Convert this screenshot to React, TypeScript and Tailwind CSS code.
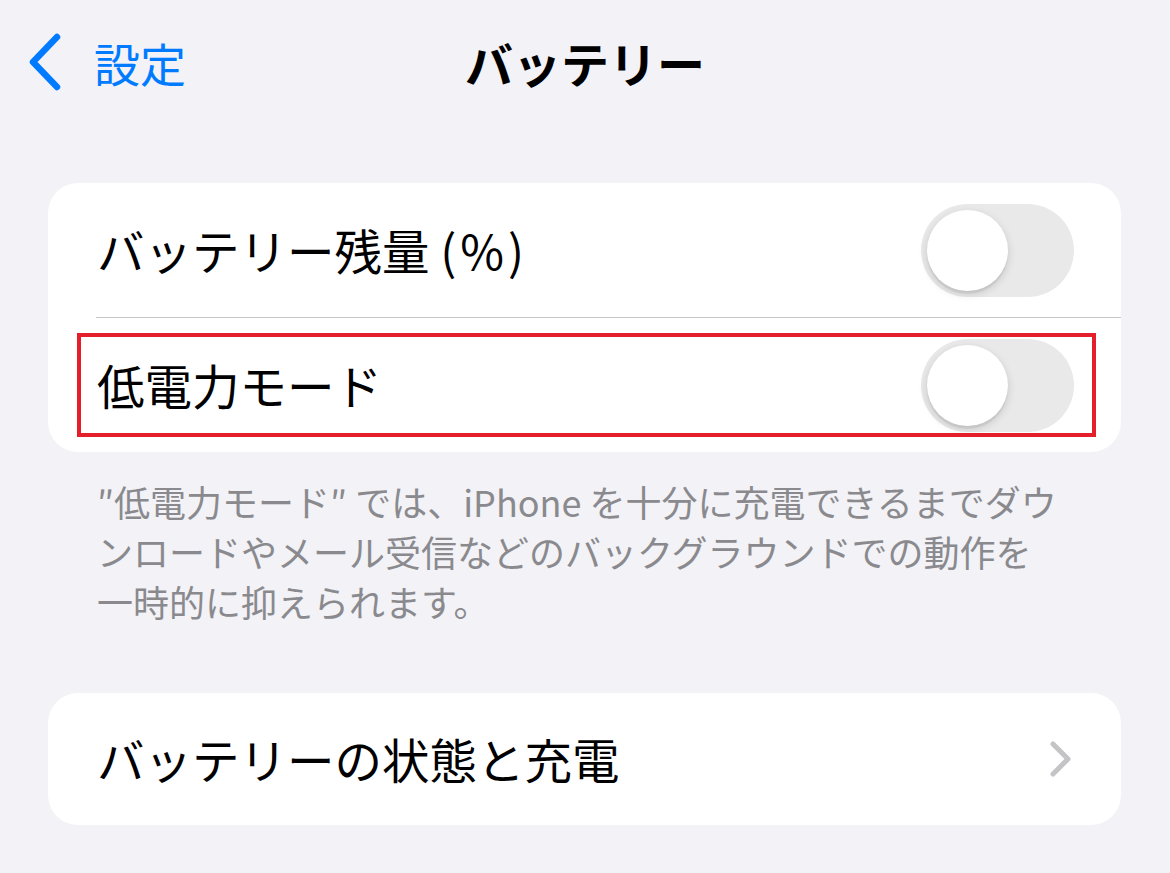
import React from "react";

const font = { fontFamily: '"Noto Sans CJK JP", "Noto Sans", sans-serif' };

const Toggle = () => (
  <div className="relative h-[93px] w-[153px] shrink-0 rounded-full bg-[#e9e9ea]">
    <div className="absolute left-[6px] top-[6px] h-[81px] w-[81px] rounded-full bg-white shadow-[0_3px_8px_rgba(0,0,0,0.15),0_3px_1px_rgba(0,0,0,0.06)]" />
  </div>
);

export default function App() {
  return (
    <div
      className="h-[873px] w-[1170px] overflow-hidden bg-[#f2f2f7] text-black"
      style={font}
    >
      {/* Nav bar */}
      <div className="relative flex h-[124px] items-center">
        <div className="flex items-center pl-[28px]">
          <svg width="34" height="58" viewBox="0 0 34 58" fill="none">
            <path
              d="M29 4 L5 29 L29 54"
              stroke="#007aff"
              strokeWidth="6.5"
              strokeLinecap="round"
              strokeLinejoin="round"
            />
          </svg>
          <span className="ml-[32px] text-[46px] leading-none text-[#007aff]">設定</span>
        </div>
        <div className="absolute inset-x-0 top-0 flex h-[124px] items-center justify-center">
          <span className="text-[48px] font-bold leading-none">バッテリー</span>
        </div>
      </div>

      <div className="px-[48px] pt-[59px]">
        {/* Card 1 */}
        <div className="w-[1073px] overflow-hidden rounded-[30px] bg-white">
          <div className="flex h-[134px] items-center justify-between pl-[49px] pr-[47px]">
            <span className="text-[47.5px] leading-none">
              バッテリー残量 <span className="tracking-[4px]">(%)</span>
            </span>
            <Toggle />
          </div>
          <div className="ml-[48px] h-px bg-[#c6c6c8]" />
          <div className="relative flex h-[134px] items-center justify-between pl-[49px] pr-[47px]">
            <span className="text-[47.5px] leading-none">低電力モード</span>
            <Toggle />
            <div className="pointer-events-none absolute left-[29px] top-[15px] h-[104px] w-[1019px] border-4 border-[#e41e2b]" />
          </div>
        </div>

        {/* Footer */}
        <p className="mt-[24px] pl-[49px] text-[36px] leading-[50px] text-[#8a8a8e]">
          ″低電力モード″ では、iPhone を十分に充電できるまでダウ
          <br />
          ンロードやメール受信などのバックグラウンドでの動作を
          <br />
          一時的に抑えられます。
        </p>

        {/* Card 2 */}
        <div className="mt-[67px] flex h-[132px] w-[1073px] items-center justify-between rounded-[30px] bg-white pl-[49px] pr-[48px]">
          <span className="text-[47.5px] leading-none">バッテリーの状態と充電</span>
          <svg width="24" height="38" viewBox="0 0 24 38" fill="none">
            <path
              d="M4 4 L19 19 L4 34"
              stroke="#c4c4c6"
              strokeWidth="5"
              strokeLinecap="round"
              strokeLinejoin="round"
            />
          </svg>
        </div>
      </div>
    </div>
  );
}
